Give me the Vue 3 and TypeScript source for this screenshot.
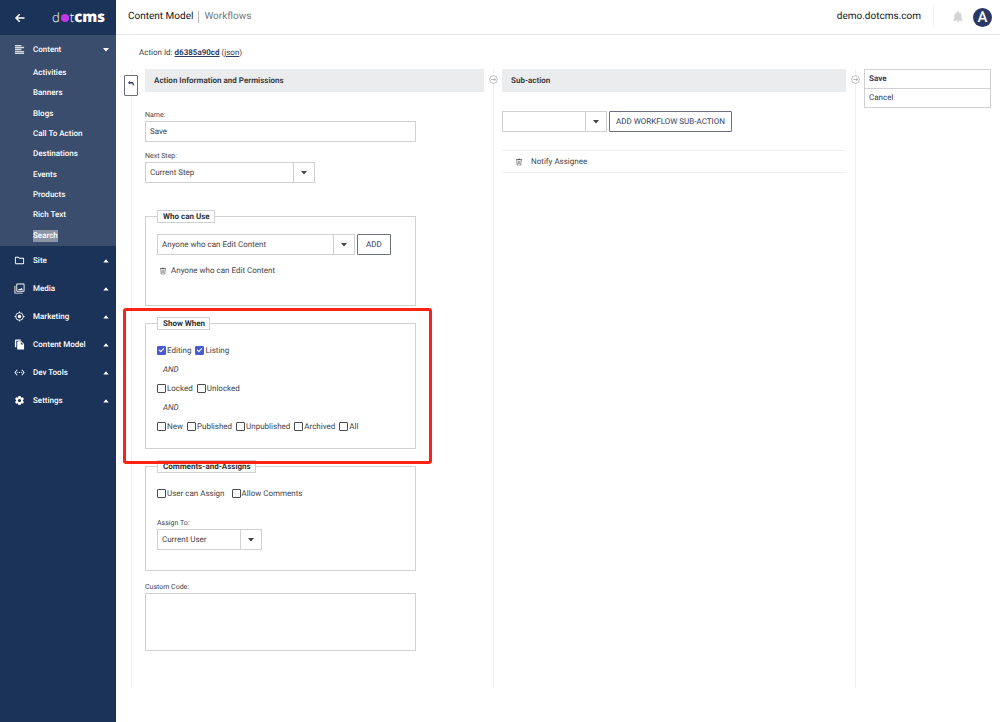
<script setup lang="ts">
import { ref } from 'vue'

interface NavSection {
  label: string
  icon: string
}

interface Check {
  id: string
  label: string
  checked: boolean
}

const contentLinks: string[] = [
  'Activities', 'Banners', 'Blogs', 'Call To Action', 'Destinations',
  'Events', 'Products', 'Rich Text', 'Search',
]

const sections: NavSection[] = [
  { label: 'Site', icon: 'M9.2 6l2 2H20v10H4V6h5.200M10 4H4c-1.100 0-2 .9-2 2v12c0 1.100.9 2 2 2h16c1.100 0 2-.9 2-2V8c0-1.100-.9-2-2-2h-8z' },
  { label: 'Media', icon: 'M21 3v14H7V3h14m0-2H7a2 2 0 0 0-2 2v14c0 1.100.9 2 2 2h14a2 2 0 0 0 2-2V3a2 2 0 0 0-2-2zM1 6v15c0 1.100.9 2 2 2h16v-2H3V6H1zm10 6.500L8.500 15.500h11l-3.500-5-2.500 3.300z' },
  { label: 'Marketing', icon: 'M12 8a4 4 0 1 0 0 8 4 4 0 0 0 0-8zm8.940 3A9 9 0 0 0 13 3.060V1h-2v2.060A9 9 0 0 0 3.060 11H1v2h2.060A9 9 0 0 0 11 20.940V23h2v-2.060A9 9 0 0 0 20.940 13H23v-2h-2.060zM12 19a7 7 0 1 1 0-14 7 7 0 0 1 0 14z' },
  { label: 'Content Model', icon: 'M15 1H4a2 2 0 0 0-2 2v15h3V4h10V1zm1 4H9a2 2 0 0 0-2 2v14c0 1.100.9 2 2 2h11a2 2 0 0 0 2-2V11l-6-6zm-1 7V6.500l5.500 5.500H15z' },
  { label: 'Dev Tools', icon: 'M7.770 6.760L6.230 5.480.82 12l5.410 6.520 1.540-1.280L3.420 12l4.350-5.240zM7 13h2v-2H7v2zm10-2h-2v2h2v-2zm-6 2h2v-2h-2v2zm6.770-7.520l-1.540 1.280L20.580 12l-4.350 5.240 1.540 1.280L23.180 12l-5.410-6.520z' },
  { label: 'Settings', icon: 'M19.430 12.980a7.800 7.800 0 0 0 0-1.960l2.110-1.650a.5.5 0 0 0 .12-.64l-2-3.460a.5.5 0 0 0-.61-.22l-2.490 1a7.300 7.300 0 0 0-1.690-.98l-.38-2.650A.49.49 0 0 0 14 2h-4a.49.49 0 0 0-.49.420l-.38 2.650c-.61.250-1.170.590-1.690.980l-2.490-1a.49.49 0 0 0-.61.220l-2 3.460a.49.49 0 0 0 .12.640l2.110 1.650a7.900 7.900 0 0 0 0 1.960l-2.110 1.650a.5.5 0 0 0-.12.640l2 3.460c.12.220.39.300.61.220l2.490-1c.52.400 1.080.730 1.690.980l.38 2.650c.03.240.24.420.49.420h4c.250 0 .46-.18.49-.42l.38-2.650a7.300 7.300 0 0 0 1.690-.98l2.490 1c.23.090.49 0 .61-.22l2-3.460a.5.5 0 0 0-.12-.64l-2.110-1.650zM12 15.500a3.500 3.500 0 1 1 0-7 3.500 3.500 0 0 1 0 7z' },
]

const trashIcon = 'M15 4V2H9v2H3v2h1.500l1 16h13l1-16H21V4h-6zM7.500 20l-.9-14h10.800l-.9 14h-9zM9 8h1.500v10H9zM13.500 8H15v10h-1.500z'

const modeChecks = ref<Check[]>([
  { id: 'editing', label: 'Editing', checked: true },
  { id: 'listing', label: 'Listing', checked: true },
])
const lockChecks = ref<Check[]>([
  { id: 'locked', label: 'Locked', checked: false },
  { id: 'unlocked', label: 'Unlocked', checked: false },
])
const stateChecks = ref<Check[]>([
  { id: 'new', label: 'New', checked: false },
  { id: 'published', label: 'Published', checked: false },
  { id: 'unpublished', label: 'Unpublished', checked: false },
  { id: 'archived', label: 'Archived', checked: false },
  { id: 'all', label: 'All', checked: false },
])
const assignChecks = ref<Check[]>([
  { id: 'can-assign', label: 'User can Assign', checked: false },
  { id: 'comments', label: 'Allow Comments', checked: false },
])

const actionName = ref('Save')
const customCode = ref('')
</script>

<template>
  <div class="app">
    <aside class="sidebar">
      <div class="brand">
        <button class="back" type="button" aria-label="Collapse menu">
          <svg viewBox="0 0 24 24"><path d="M21 12H4M11.500 4.500L4 12l7.500 7.500" /></svg>
        </button>
        <a class="logo" href="#" aria-label="dotcms"><span class="thin">d</span><i class="dot"></i><span class="thin">t</span><b>cms</b></a>
      </div>
      <nav>
        <div class="open-section">
          <button class="nav-row" type="button">
            <svg class="nav-icon lines" viewBox="0 0 24 24"><path d="M2 2h14v3H2zM2 6h20v3H2zM2 10.500h14v3H2zM2 15h20v3H2zM2 19h20v3H2z" /></svg>
            <span>Content</span>
            <svg class="chev" viewBox="0 0 6 4"><path d="M0 0h6L3 3.500z" /></svg>
          </button>
          <ul class="sub">
            <li v-for="link in contentLinks" :key="link">
              <a href="#" :class="{ active: link === 'Search' }">{{ link }}</a>
            </li>
          </ul>
        </div>
        <button v-for="s in sections" :key="s.label" class="nav-row" type="button">
          <svg class="nav-icon" viewBox="0 0 24 24"><path fill-rule="evenodd" :d="s.icon" /></svg>
          <span>{{ s.label }}</span>
          <svg class="chev" viewBox="0 0 6 4"><path d="M.3 3.500h5.400L3 .3z" /></svg>
        </button>
      </nav>
    </aside>

    <div class="page">
      <header class="topbar">
        <span class="crumb">Content Model</span>
        <span class="crumb current">Workflows</span>
        <a class="host" href="#">demo.dotcms.com</a>
        <button class="bell" type="button" aria-label="Notifications">
          <svg viewBox="0 0 24 24"><path d="M12 23c1.300 0 2.400-1 2.400-2.300H9.600C9.600 22 10.700 23 12 23zm7.500-6.500v-6c0-3.600-2-6.600-5.500-7.400V2a2 2 0 0 0-4 0v1.100C6.500 3.900 4.500 6.900 4.500 10.500v6L2 18.500v1.200h20v-1.200z" /></svg>
        </button>
        <button class="avatar" type="button">A</button>
      </header>

      <main class="main">
        <p class="action-id">Action Id: <a class="id" href="#">d6385a90cd</a> (<a href="#">json</a>)</p>

        <div class="workspace">
          <div class="rail first">
            <button class="return" type="button" aria-label="Go back">
              <svg viewBox="0 0 12 10"><path d="M0 3.500L4 0v2.200h4c2.400 0 3.500 1.200 3.500 3.300V9H9.200V6.200c0-.9-.4-1.300-1.400-1.300H4V7z" /></svg>
            </button>
          </div>

          <section>
            <h2 class="panel-title">Action Information and Permissions</h2>
            <form class="form" @submit.prevent>
              <div class="field">
                <label for="name">Name:</label>
                <input id="name" v-model="actionName" class="text" type="text" />
              </div>
              <div class="field">
                <label for="step">Next Step:</label>
                <span class="select w-step">
                  <select id="step"><option>Current Step</option></select>
                  <span class="arrow"><svg viewBox="0 0 6 4"><path d="M0 0h6L3 3.500z" /></svg></span>
                </span>
              </div>

              <fieldset class="who">
                <legend>Who can Use</legend>
                <div class="inline">
                  <span class="select w-who">
                    <select aria-label="Who can use"><option>Anyone who can Edit Content</option></select>
                    <span class="arrow"><svg viewBox="0 0 6 4"><path d="M0 0h6L3 3.500z" /></svg></span>
                  </span>
                  <button class="btn" type="button">ADD</button>
                </div>
                <div class="granted">
                  <button class="trash" type="button" aria-label="Remove"><svg viewBox="0 0 24 24"><path fill-rule="evenodd" :d="trashIcon" /></svg></button>
                  <span>Anyone who can Edit Content</span>
                </div>
              </fieldset>

              <div class="highlight">
                <fieldset class="show">
                  <legend>Show When</legend>
                  <div class="checks">
                    <label v-for="c in modeChecks" :key="c.id" :for="c.id"><input :id="c.id" v-model="c.checked" type="checkbox" />{{ c.label }}</label>
                  </div>
                  <div class="and">AND</div>
                  <div class="checks">
                    <label v-for="c in lockChecks" :key="c.id" :for="c.id"><input :id="c.id" v-model="c.checked" type="checkbox" />{{ c.label }}</label>
                  </div>
                  <div class="and">AND</div>
                  <div class="checks">
                    <label v-for="c in stateChecks" :key="c.id" :for="c.id"><input :id="c.id" v-model="c.checked" type="checkbox" />{{ c.label }}</label>
                  </div>
                </fieldset>
              </div>

              <fieldset class="assigns">
                <legend>Comments-and-Assigns</legend>
                <div class="checks wide">
                  <label v-for="c in assignChecks" :key="c.id" :for="c.id"><input :id="c.id" v-model="c.checked" type="checkbox" />{{ c.label }}</label>
                </div>
                <div class="field assign">
                  <label for="assign">Assign To:</label>
                  <span class="select w-small">
                    <select id="assign"><option>Current User</option></select>
                    <span class="arrow"><svg viewBox="0 0 6 4"><path d="M0 0h6L3 3.500z" /></svg></span>
                  </span>
                </div>
              </fieldset>

              <div class="field">
                <label for="code">Custom Code:</label>
                <textarea id="code" v-model="customCode"></textarea>
              </div>
            </form>
          </section>

          <div class="rail">
            <svg class="node" viewBox="0 0 16 16"><circle cx="8" cy="8" r="7" /><path d="M4 8h8M9 5l3 3-3 3" /></svg>
          </div>

          <section>
            <h2 class="panel-title">Sub-action</h2>
            <div class="sub-form inline">
              <span class="select w-small">
                <select aria-label="Sub-action"><option></option></select>
                <span class="arrow"><svg viewBox="0 0 6 4"><path d="M0 0h6L3 3.500z" /></svg></span>
              </span>
              <button class="btn" type="button">ADD WORKFLOW SUB-ACTION</button>
            </div>
            <ul class="sub-list">
              <li>
                <button class="trash" type="button" aria-label="Delete"><svg viewBox="0 0 24 24"><path fill-rule="evenodd" :d="trashIcon" /></svg></button>
                <a href="#">Notify Assignee</a>
              </li>
            </ul>
          </section>

          <div class="rail">
            <svg class="node" viewBox="0 0 16 16"><circle cx="8" cy="8" r="7" /><path d="M4 8h8M9 5l3 3-3 3" /></svg>
          </div>

          <div class="menu">
            <button class="save" type="button">Save</button>
            <button type="button">Cancel</button>
          </div>
        </div>
      </main>
    </div>
  </div>
</template>

<style>
body {
  margin: 0;
  background: #fff;
}
</style>

<style scoped>
.app {
  display: grid;
  grid-template-columns: 116px minmax(0, 1fr);
  min-height: 100vh;
  font-family: Roboto, "Liberation Sans", sans-serif;
  font-size: 8px;
  line-height: 12px;
  text-rendering: geometricPrecision;
  color: #444447;
}
.app *,
.app *::before,
.app *::after {
  box-sizing: border-box;
}
button,
input,
select,
textarea {
  margin: 0;
  padding: 0;
  border: 0;
  border-radius: 0;
  background: none;
  color: inherit;
  font: inherit;
  text-rendering: inherit;
}
svg {
  display: block;
  fill: currentColor;
}
a {
  color: inherit;
  text-decoration: none;
}
ul {
  margin: 0;
  padding: 0;
  list-style: none;
}

/* Sidebar */
.sidebar {
  background: #1b3359;
  color: #fff;
}
.brand {
  display: flex;
  align-items: center;
  justify-content: space-between;
  height: 35px;
  padding: 0 11px 0 14px;
}
.back svg {
  width: 12px;
  height: 12px;
  fill: none;
  stroke: #fff;
  stroke-width: 3;
}
.logo {
  display: flex;
  align-items: baseline;
  font: 15px/20px "Open Sans", "Noto Sans", sans-serif;
  margin-bottom: 2px;
}
.logo .thin {
  font-size: 13px;
  font-weight: 300;
}
.logo b {
  font-weight: 800;
}
.dot {
  width: 8px;
  height: 8px;
  margin: 0 1px;
  border-radius: 50%;
  background: #c336e5;
}
.open-section {
  background: #3b4d6d;
}
.nav-row {
  display: flex;
  align-items: center;
  width: 100%;
  height: 28px;
  padding: 1px 7px 0 14px;
  font-weight: 500;
  text-align: left;
}
.nav-icon {
  width: 11px;
  height: 11px;
  margin-right: 8px;
}
.lines {
  opacity: 0.8;
}
.chev {
  width: 6px;
  height: 4px;
  margin-left: auto;
}
.sub {
  display: grid;
  grid-auto-rows: 1fr;
  align-items: center;
  height: 183px;
  padding-left: 33px;
  font-weight: 500;
}
.sub .active {
  display: inline-block;
  background: #8c95a5;
}

/* Top bar */
.page {
  display: flex;
  flex-direction: column;
}
.topbar {
  display: flex;
  align-items: center;
  height: 35px;
  padding: 0 8px 0 12px;
  border-bottom: 1px solid #e6e7e9;
  font-size: 10px;
  color: #14151a;
}
.crumb.current {
  margin-left: 5px;
  padding-left: 5px;
  border-left: 1px solid #b3b5b9;
  color: #76777c;
}
.host {
  margin-left: auto;
  padding-right: 12px;
  line-height: 24px;
  border-right: 1px solid #f4f4f5;
}
.bell {
  margin: 0 9px 0 18px;
  color: #d3d4d6;
}
.bell svg {
  width: 12px;
  height: 12px;
}
.avatar {
  width: 19px;
  height: 19px;
  border-radius: 50%;
  background: #2a3866;
  color: #fff;
  font-size: 15px;
  font-weight: 500;
  line-height: 19px;
  text-align: center;
}

/* Workspace */
.main {
  display: flex;
  flex: 1;
  flex-direction: column;
  padding: 10px 9px 34px 8px;
}
.action-id {
  margin: 0 0 8px 15px;
  line-height: 16px;
}
.action-id a {
  color: #333e63;
  text-decoration: underline;
}
.action-id .id {
  font-weight: 700;
}
.workspace {
  display: grid;
  flex: 1;
  grid-template-columns: 21px minmax(0, 339fr) 18px minmax(0, 344fr) 18px 127px;
}
.rail {
  display: flex;
  justify-content: center;
  background: linear-gradient(#f0f0f1, #f0f0f1) center / 1px 100% no-repeat;
}
.rail.first {
  margin-right: 7px;
}
.node {
  width: 9px;
  height: 9px;
  margin-top: 6px;
  border-radius: 50%;
  background: #fff;
  fill: none;
  stroke: #a9aaad;
  stroke-width: 1.500;
}
.return {
  display: flex;
  align-items: center;
  justify-content: center;
  width: 14px;
  height: 21px;
  margin-top: 6px;
  padding-bottom: 4px;
  border: 1px solid #6b6f80;
  border-radius: 1px;
  background: #fff;
  color: #2f3b64;
}
.return svg {
  width: 6px;
  height: 5px;
}
.panel-title {
  height: 23px;
  margin: 0;
  padding-left: 9px;
  background: #ebecee;
  color: #3e3f43;
  font-size: 8px;
  font-weight: 700;
  line-height: 23px;
}
.form {
  width: 80%;
  padding-top: 18px;
}
.field {
  margin-bottom: 9px;
}
.field > label {
  display: block;
  margin-bottom: 1px;
  font-size: 7px;
  line-height: 10px;
}
.text,
textarea {
  display: block;
  width: 100%;
  height: 21px;
  padding: 0 4px;
  border: 1px solid #cfd0d2;
}
textarea {
  height: 58px;
  resize: none;
}
.select {
  position: relative;
  display: block;
  height: 21px;
  border: 1px solid #cfd0d2;
}
.select select {
  width: 100%;
  height: 19px;
  padding: 0 22px 0 4px;
  appearance: none;
}
.arrow {
  position: absolute;
  inset: 0 0 0 auto;
  display: grid;
  place-items: center;
  width: 21px;
  border-left: 1px solid #cfd0d2;
  pointer-events: none;
}
.arrow svg {
  width: 6px;
  height: 4px;
}
.w-step {
  width: 170px;
}
.w-who {
  width: 198px;
}
.w-small {
  width: 105px;
}
.inline {
  display: flex;
  gap: 2px;
}
.btn {
  height: 21px;
  padding: 0 8px;
  border: 1px solid #6b6f80;
  border-radius: 1px;
  color: #333e63;
}
.sub-form .btn {
  padding: 0 6px;
}
fieldset {
  min-width: 0;
  margin: 0 0 11px;
  padding: 11px 11px 0;
  border: 1px solid #cfd0d2;
}
legend {
  height: 13px;
  padding: 0 4px 0 5px;
  border: 1px solid #cfd0d2;
  background: #fff;
  color: #303135;
  font-weight: 700;
  line-height: 11px;
}
.who {
  margin-top: 27px;
  padding-bottom: 28px;
}
.granted {
  display: flex;
  align-items: center;
  gap: 4px;
  margin-top: 10px;
  padding-left: 2px;
}
.trash {
  color: #55565a;
}
.trash svg {
  width: 8px;
  height: 8px;
}
.highlight {
  position: relative;
}
.highlight::after {
  content: "";
  position: absolute;
  inset: -9px -16px -15px -22px;
  border: 3px solid #fb2313;
  border-radius: 3px;
  pointer-events: none;
}
.show {
  padding-bottom: 12px;
}
.checks {
  display: flex;
  align-items: center;
  gap: 4px;
  height: 19px;
}
.checks.wide {
  gap: 7px;
}
.checks label {
  display: flex;
  align-items: center;
  gap: 1px;
  white-space: nowrap;
}
.checks input {
  width: 9px;
  height: 9px;
  border: 1px solid #4b4c50;
  border-radius: 1px;
  appearance: none;
}
.checks input:checked {
  border-color: #4a5bd0;
  background: #4a5bd0;
}
.checks input:checked::after {
  content: "";
  display: block;
  width: 5px;
  height: 3px;
  margin: 1px;
  border: solid #fff;
  border-width: 0 0 1px 1px;
  transform: rotate(-45deg);
}
.and {
  padding-left: 6px;
  font-style: italic;
  line-height: 19px;
}
.assigns {
  padding-bottom: 20px;
}
.assign {
  margin: 15px 0 0;
}
.sub-form {
  padding-top: 19px;
}
.sub-list {
  margin-top: 18px;
}
.sub-list li {
  display: flex;
  align-items: center;
  gap: 8px;
  height: 23px;
  padding-left: 13px;
  border: solid #efeff0;
  border-width: 1px 0;
}
.menu {
  align-self: start;
  border: 1px solid #cfd0d2;
}
.menu button {
  display: block;
  width: 100%;
  height: 18px;
  padding: 0 4px;
  color: #333e63;
  text-align: left;
}
.menu .save {
  height: 19px;
  border-bottom: 1px solid #cfd0d2;
  font-weight: 700;
}
</style>
